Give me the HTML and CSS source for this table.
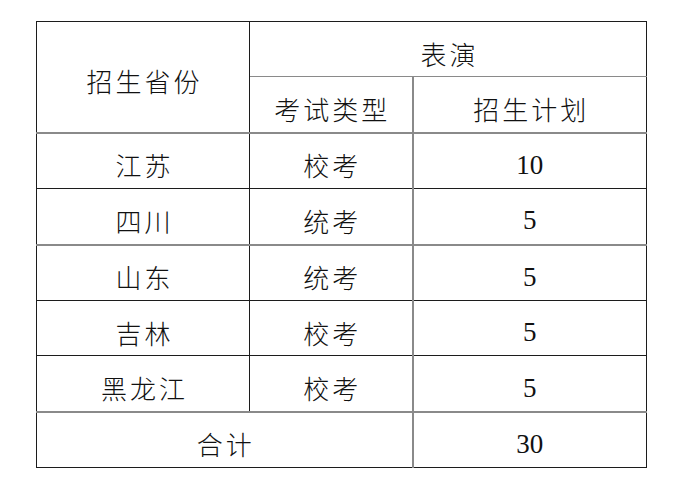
FILE: index.html
```html
<!DOCTYPE html>
<html lang="zh">
<head>
<meta charset="utf-8">
<link rel="stylesheet" href="styles.css">
</head>
<body>
<table class="plan">
  <colgroup>
    <col class="c1"><col class="c2"><col class="c3">
  </colgroup>
  <tr class="r-top">
    <td rowspan="2" class="zh bk-b2">招生省份</td>
    <td colspan="2" class="zh g-b1">表演</td>
  </tr>
  <tr>
    <td class="zh g-b2">考试类型</td>
    <td class="zh g-b2 g-l">招生计划</td>
  </tr>
  <tr>
    <td class="zh">江苏</td>
    <td class="zh">校考</td>
    <td class="num g-l">10</td>
  </tr>
  <tr>
    <td class="zh g-b2">四川</td>
    <td class="zh g-b2">统考</td>
    <td class="num g-l g-b2">5</td>
  </tr>
  <tr>
    <td class="zh">山东</td>
    <td class="zh">统考</td>
    <td class="num g-l">5</td>
  </tr>
  <tr>
    <td class="zh">吉林</td>
    <td class="zh">校考</td>
    <td class="num g-l">5</td>
  </tr>
  <tr>
    <td class="zh g-b2">黑龙江</td>
    <td class="zh g-b2">校考</td>
    <td class="num g-l g-b2">5</td>
  </tr>
  <tr>
    <td colspan="2" class="zh">合计</td>
    <td class="num g-l">30</td>
  </tr>
</table>
</body>
</html>
```
FILE: styles.css
```css
html, body {
  margin: 0;
  padding: 0;
  background: #fff;
}
body {
  padding: 21px 0 0 36px;
}
.plan {
  border-collapse: collapse;
  table-layout: fixed;
  width: 610px;
  color: #111;
}
.c1 { width: 213px; }
.c2 { width: 163px; }
.c3 { width: 234px; }
.plan td {
  border: 1px solid #1c1c1c;
  height: 45.4px;
  padding: 9px 0 0 0;
  text-align: center;
  vertical-align: middle;
}
.zh {
  font-family: "Noto Sans CJK SC", sans-serif;
  font-weight: 300;
  font-size: 26px;
  letter-spacing: 3px;
  text-indent: 3px;
  line-height: 1;
}
.num {
  font-family: "Liberation Serif", "Times New Roman", serif;
  font-size: 27px;
  line-height: 1;
}
.plan td.g-b1 { border-bottom: 1px solid #8a8a8a; }
.plan td.g-b2 { border-bottom: 2px solid #8a8a8a; }
.plan td.bk-b2 { border-bottom: 2px solid #8a8a8a; }
.plan td.g-l { border-left: 2px solid #8a8a8a; }
```
